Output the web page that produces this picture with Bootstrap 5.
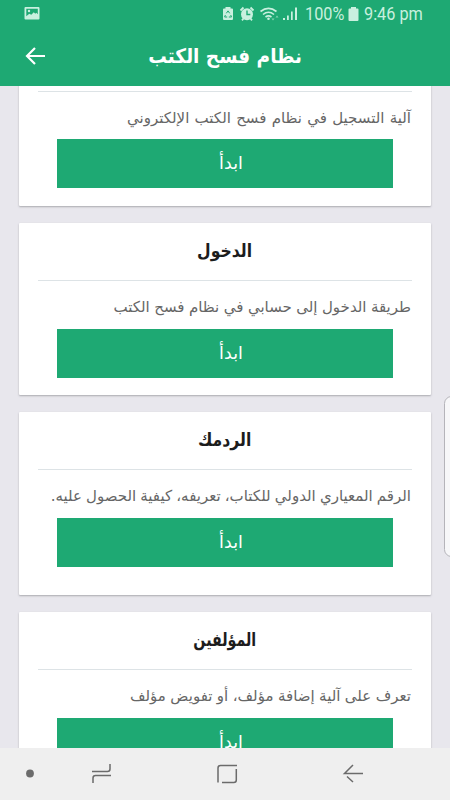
<!DOCTYPE html>
<html lang="ar">
<head>
<meta charset="utf-8">
<meta name="viewport" content="width=device-width, initial-scale=1">
<title>نظام فسح الكتب</title>
<link href="https://cdn.jsdelivr.net/npm/bootstrap@5.3.0/dist/css/bootstrap.min.css" rel="stylesheet">
<style>
body{background:#e8e7ed;font-family:"DejaVu Sans",sans-serif}
.app-head{height:86px;background:#1ea973;z-index:2;flex:none}
.status{height:26px;padding:1px 26px 0 24px;color:#c9f0df;font:17.5px/24px Roboto,sans-serif}
.status svg{flex:none}
.level,.clock{white-space:nowrap}
.level span,.clock span{display:inline-block;transform:scaleX(.93);transform-origin:left}
.level{width:39px;margin-left:7px}
.clock{width:60px;margin-left:5px}
.title-row{height:60px;padding:0 25px}
.title-row h1{font-size:20px;line-height:30px;transform:scaleX(.925)}
.lead-gap{width:21px}
.feed{padding:0 19px;gap:17px;margin-top:-53px;min-height:0}
.topic{border:0;border-radius:1px;height:172.5px;padding:0 19px;box-shadow:0 1px 2px #aaaab0;flex:none}
.topic.tall{height:183px}
.topic h2,.topic-rule{font-size:18px;font-weight:700;height:58px;line-height:56px;border-bottom:1px solid #dde3e6;color:#1c1c1c}
.topic-rule{height:59px}
.topic-rule + p{height:34px}
.topic h2 span{display:inline-block;transform:scaleX(.87)}
.topic h2 .narrow{transform:scaleX(.79)}
.topic p{font-size:15px;line-height:26px;height:35px;margin:13px 0 0;padding-right:1px;color:#666;white-space:nowrap}
.topic .topic-rule + p{height:34px}
.ws-a{word-spacing:.5px}
.ws-b{word-spacing:-.3px}
.ws-c{word-spacing:-.6px}
.topic .btn{height:49px;margin:0 19px;border-radius:0;background:#1ea973;color:#fff;border:0;font-size:17.5px;padding:0 0 0 12px;line-height:48px}
.sysnav{height:52px;background:#efefef;z-index:2;flex:none}
.edge{right:-9px;top:396px;width:15px;height:161px;border:1px solid #b5b4ba;border-radius:8px;background:#f7f7f9;z-index:3}
</style>
<script src="https://cdn.jsdelivr.net/npm/bootstrap@5.3.0/dist/js/bootstrap.bundle.min.js"></script>
</head>
<body>
<div class="vh-100 d-flex flex-column overflow-hidden position-relative">
<header class="app-head position-relative">
 <div class="status d-flex align-items-center">
  <svg class="me-auto" width="16" height="13" viewBox="0 0 16 13"><path fill="#c9f0df" fill-rule="evenodd" d="M1.500 0h13q1 0 1 1v10.500q0 1-1 1h-13q-1 0-1-1V1q0-1 1-1zM2.300 1.800v7.500l3-2.500 2 1 2.500-2.500 1.500 1.500 1-1 1.500 1.500v-5.500z"/><circle cx="5" cy="4" r="1.200" fill="#c9f0df"/></svg>
  <svg width="76" height="16" viewBox="0 0 76 16" fill="#c9f0df">
   <path d="M3.500 1h5v1.500H10q1 0 1 1V13q0 1-1 1H2q-1 0-1-1V3.500q0-1 1-1h1.500z"/>
   <path d="M4.300 7.300L6 4.900l1.700 2.400M8.700 9l.8 2H6.800M5.200 11H2.600l.8-2" fill="none" stroke="#1ea973" stroke-width="1"/>
   <circle cx="25" cy="8.200" r="6"/><path d="M18.500 4.500L21.500 1.500M31.500 4.500L28.500 1.500M21.500 12.500L20 14.300M28.500 12.500L30 14.300" stroke="#c9f0df" stroke-width="1.800"/>
   <path d="M25 4.500v4h3.300" fill="none" stroke="#1ea973" stroke-width="1.400"/>
   <g fill="none" stroke="#c9f0df" stroke-width="1.600"><path d="M38.500 5.500Q46.500-.8 54.500 5.500M41 8.500Q46.500 4 52 8.500M43.500 11Q46.500 8.800 49.500 11"/></g>
   <circle cx="46.500" cy="12.800" r="1.300"/>
   <path d="M49.500 12.500h3l-1.500 2zM53.500 11.500h3L55 9.500z" opacity=".6"/>
   <path d="M61 12h2v2h-2zM65 9.500h1.800V14H65zM69 5.500h1.700V14H69zM73 1.500h2V14h-2z"/>
  </svg>
  <span class="level"><span>100%</span></span>
  <svg class="ms-1" width="11" height="14" viewBox="0 0 11 14"><path fill="#c9f0df" d="M3 0h5v1.500h1.500q1 0 1 1V13q0 1-1 1h-8q-1 0-1-1V2.500q0-1 1-1H3z"/></svg>
  <span class="clock"><span>9:46 pm</span></span>
 </div>
 <div class="title-row d-flex align-items-center justify-content-between">
  <svg width="21" height="18" viewBox="0 0 21 18" fill="none" stroke="#fff" stroke-width="2.200"><path d="M20 9H2M10 1L2 9l8 8"/></svg>
  <h1 class="m-0 fw-bold text-white" dir="rtl">نظام فسح الكتب</h1>
  <span class="lead-gap"></span>
 </div>
</header>
<main class="feed d-flex flex-column flex-grow-1" dir="rtl">
 <section class="card topic"><div class="topic-rule"></div><p class="ws-a">آلية التسجيل في نظام فسح الكتب الإلكتروني</p><a class="btn" href="#">ابدأ</a></section>
 <section class="card topic"><h2 class="m-0 text-center"><span>الدخول</span></h2><p class="ws-b">طريقة الدخول إلى حسابي في نظام فسح الكتب</p><a class="btn" href="#">ابدأ</a></section>
 <section class="card topic tall"><h2 class="m-0 text-center"><span>الردمك</span></h2><p class="ws-c">الرقم المعياري الدولي للكتاب، تعريفه، كيفية الحصول عليه.</p><a class="btn" href="#">ابدأ</a></section>
 <section class="card topic"><h2 class="m-0 text-center"><span class="narrow">المؤلفين</span></h2><p class="ws-b">تعرف على آلية إضافة مؤلف، أو تفويض مؤلف</p><a class="btn" href="#">ابدأ</a></section>
</main>
<div class="edge position-absolute"></div>
<footer class="sysnav d-flex">
 <svg width="450" height="52" viewBox="0 0 450 52" fill="none" stroke="#6b6b6b" stroke-width="1.500">
  <circle cx="30" cy="25.500" r="3.900" fill="#6b6b6b" stroke="none"/>
  <path d="M92 23.500h15.500q2.500 0 2.500-2.500v-5M111 27.500H95.500q-2.500 0-2.500 2.500v5"/>
  <path d="M218 34.500V20q0-2.500 2.500-2.500H237M236.300 21v11q0 2.500-2.500 2.500H222"/>
  <path d="M363 25.500h-18.500L353 17M347 28.500l6 5.500"/>
 </svg>
</footer>
</div>
</body>
</html>
